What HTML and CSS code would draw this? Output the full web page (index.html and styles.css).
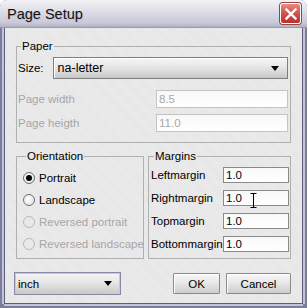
FILE: index.html
```html
<!DOCTYPE html>
<html lang="en">

<head>
    <meta charset="UTF-8">
    <meta name="viewport" content="width=device-width, initial-scale=1.0">
    <title>Page Setup</title>
    <link rel="stylesheet" href="styles.css">
</head>

<body>
    <div class="window">
        <div class="titlebar">
            <span class="title">Page Setup</span>
            <button class="close" title="Close">
                <svg width="12" height="12" viewBox="0 0 12 12">
                    <path d="M1.5 1.5 L10.5 10.5 M10.5 1.5 L1.5 10.5" stroke="#fff" stroke-width="2.4" stroke-linecap="square" />
                </svg>
            </button>
        </div>
        <div class="content">
            <fieldset class="group paper">
                <legend>Paper</legend>
                <div class="size-row">
                    <span class="lbl">Size:</span>
                    <div class="combo big">
                        <span>na-letter</span>
                        <span class="arrow"></span>
                    </div>
                </div>
                <div class="field-row disabled">
                    <span class="lbl">Page width</span>
                    <input type="text" value="8.5" disabled>
                </div>
                <div class="field-row disabled">
                    <span class="lbl">Page heigth</span>
                    <input type="text" value="11.0" disabled>
                </div>
            </fieldset>

            <div class="columns">
                <fieldset class="group orientation">
                    <legend>Orientation</legend>
                    <label class="radio"><span class="dot checked"></span>Portrait</label>
                    <label class="radio"><span class="dot"></span>Landscape</label>
                    <label class="radio disabled"><span class="dot"></span>Reversed portrait</label>
                    <label class="radio disabled"><span class="dot"></span>Reversed landscape</label>
                </fieldset>
                <fieldset class="group margins">
                    <legend>Margins</legend>
                    <div class="margin-grid">
                        <span>Leftmargin</span>
                        <input type="text" value="1.0">
                        <span>Rightmargin</span>
                        <div class="cursor-wrap">
                            <input type="text" value="1.0">
                            <svg class="ibeam" width="7" height="15" viewBox="0 0 7 15">
                                <path d="M0.5 0.5 H6.5 M3.5 0.5 V14.5 M0.5 14.5 H6.5" stroke="#000" stroke-width="1" fill="none" />
                            </svg>
                        </div>
                        <span>Topmargin</span>
                        <input type="text" value="1.0">
                        <span>Bottommargin</span>
                        <input type="text" value="1.0">
                    </div>
                </fieldset>
            </div>

            <div class="footer">
                <div class="combo unit">
                    <span>inch</span>
                    <span class="arrow"></span>
                </div>
                <div class="buttons">
                    <button class="btn ok">OK</button>
                    <button class="btn cancel">Cancel</button>
                </div>
            </div>
        </div>
    </div>
</body>

</html>
```

FILE: styles.css
```css
* {
    box-sizing: border-box;
    font-family: "Liberation Sans", Arial, sans-serif;
}

body {
    margin: 0;
    background-color: #ffffff;
}

.window {
    width: 307px;
    height: 308px;
    display: flex;
    flex-direction: column;
    background-color: #7c7c9c;
    border-radius: 7px 7px 0 0;
    overflow: hidden;
}

.titlebar {
    height: 28px;
    display: flex;
    align-items: center;
    justify-content: space-between;
    padding: 0 4px 0 7px;
    background: linear-gradient(#f2f2f6, #dcdce6 45%, #c8c8d8 85%, #b0b0c4);
    border-bottom: 1px solid #9a9ab2;
}

.title {
    font-size: 14.5px;
    color: #101010;
    text-shadow: 1px 1px 0 #c0c0d0;
    padding-top: 1px;
}

.close {
    width: 21px;
    height: 21px;
    padding: 0;
    display: flex;
    align-items: center;
    justify-content: center;
    background: linear-gradient(#ec8a80, #d4504a 50%, #b83430);
    border: 1px solid #ffffff;
    border-radius: 3px;
    box-shadow: 0 0 0 1px #9a4444;
    margin-right: 2px;
}

.content {
    flex: 1;
    margin: 0 4px 4px 4px;
    padding: 11px 11px 0 11px;
    background-color: #e9e9e9;
    background-image: repeating-linear-gradient(45deg, #ebebeb 0 1px, #e6e6e6 1px 2px);
    border: 1px solid #5c5c7c;
    border-top: none;
    box-shadow: -2px 0 0 #c4c4d8, 2px 0 0 #c4c4d8, 0 2px 0 #c4c4d8;
    font-size: 11.5px;
    color: #000;
    white-space: nowrap;
}

.group {
    margin: 0;
    border: 1px solid #b0b0b0;
    padding: 4px 2px 10px 1px;
    min-width: 0;
}

.group legend {
    font-size: 11.5px;
    line-height: 14px;
    margin-left: 3px;
    padding: 0 1px;
}

.size-row {
    display: flex;
    align-items: center;
    gap: 9px;
    margin-bottom: 11px;
}

.combo {
    display: flex;
    align-items: center;
    justify-content: space-between;
    border: 1px solid #7e7e7e;
    box-shadow: inset 1px 1px 0 #ffffff;
    background: linear-gradient(#f6f6f6, #e4e4e4 50%, #c8c8c8);
    padding: 0 8px 0 4px;
    font-size: 11.5px;
}

.combo.big {
    flex: 1;
    height: 22px;
    font-size: 12.5px;
    padding-left: 4px;
}

.arrow {
    width: 0;
    height: 0;
    border-left: 4px solid transparent;
    border-right: 4px solid transparent;
    border-top: 5px solid #000;
}

.field-row {
    display: flex;
    align-items: center;
    justify-content: space-between;
    margin-top: 6px;
}

.disabled {
    color: #a6a6a6;
}

input[type="text"] {
    font-size: 11.5px;
    font-family: "Liberation Sans", Arial, sans-serif;
    height: 16px;
    padding: 0 2px;
    border: 1px solid #8a8a8a;
    background: linear-gradient(#f8f8f8, #ffffff);
    color: #000;
    outline: none;
}

.field-row input {
    width: 132px;
    height: 18px;
    border-color: #c4c4c4;
    color: #a8a8a8;
}

.columns {
    display: grid;
    grid-template-columns: 128px 1fr;
    gap: 4px;
    margin-top: 6px;
}

.orientation {
    display: flex;
    flex-direction: column;
    gap: 10px;
    padding: 9px 0 8px 6px;
}

.radio {
    display: flex;
    align-items: center;
    gap: 4px;
    height: 12px;
}

.dot {
    flex: none;
    width: 12px;
    height: 12px;
    border-radius: 50%;
    border: 1px solid #6e6e6e;
    background: radial-gradient(circle at 40% 40%, #ffffff, #dcdcdc);
    display: flex;
    align-items: center;
    justify-content: center;
}

.dot.checked::after {
    content: "";
    width: 6px;
    height: 6px;
    border-radius: 50%;
    background-color: #000;
}

.radio.disabled .dot {
    border-color: #b8b8b8;
    background: #e9e9e9;
}

.margins {
    padding: 4px 2px 6px 2px;
}

.margin-grid {
    display: grid;
    grid-template-columns: 72px 66px;
    justify-content: space-between;
    align-items: center;
    row-gap: 7px;
}

.cursor-wrap {
    position: relative;
}

.cursor-wrap input {
    width: 100%;
}

.margin-grid input {
    width: 66px;
}

.ibeam {
    position: absolute;
    left: 27px;
    top: 3px;
}

.footer {
    display: flex;
    justify-content: space-between;
    align-items: center;
    margin-top: 13px;
}

.combo.unit {
    width: 107px;
    height: 23px;
    margin-left: -2px;
    border-color: #8888a8;
    box-shadow: inset 0 0 0 1px #c8c8dc;
    padding-left: 3px;
}

.buttons {
    display: flex;
    gap: 6px;
}

.btn {
    height: 21px;
    font-size: 11.5px;
    font-family: "Liberation Sans", Arial, sans-serif;
    border: 1px solid #8a8a8a;
    border-radius: 1px;
    background: linear-gradient(#f8f8f8, #e6e6e6 50%, #cccccc);
    box-shadow: inset 1px 1px 0 #ffffff;
    padding: 0;
}

.ok {
    width: 47px;
}

.cancel {
    width: 65px;
}
```
